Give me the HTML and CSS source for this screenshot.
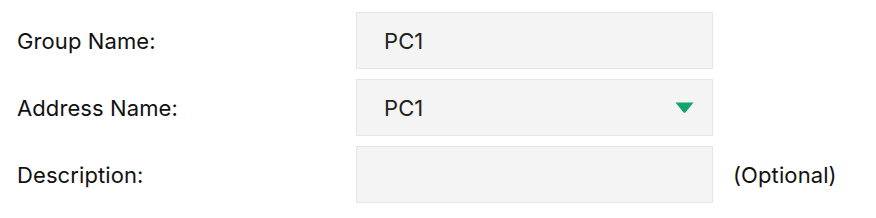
FILE: index.html
```html
<!DOCTYPE html>
<html>
<head>
  <meta charset="UTF-8">
  <title>Address Group</title>
  <link rel="stylesheet" href="styles.css">
</head>
<body>
  <div class="form">
    <div class="form-row">
      <label class="form-label" for="group-name">Group Name:</label>
      <div class="field">PC1</div>
    </div>

    <div class="form-row">
      <label class="form-label">Address Name:</label>
      <div class="field field-select">
        <span>PC1</span>
        <svg class="caret" width="19" height="11" viewBox="0 0 19 11">
          <path d="M0.5 0.5 H18.5 L10.6 10.2 Q9.5 11.2 8.4 10.2 Z" fill="#0fa56c"/>
        </svg>
      </div>
    </div>

    <div class="form-row">
      <label class="form-label">Description:</label>
      <div class="field"></div>
      <span class="hint">(Optional)</span>
    </div>
  </div>
</body>
</html>
```

FILE: styles.css
```css
body {
  margin: 0;
  padding: 12px 0 0 17px;
  font-family: Inter, 'Noto Sans', sans-serif;
  font-size: 22px;
  letter-spacing: 0.1px;
  color: #111;
  background-color: #fff;
}

.form {
  display: flex;
  flex-direction: column;
  gap: 10px;
}

.form-row {
  display: flex;
  align-items: center;
}

.form-label {
  width: 339px;
  flex-shrink: 0;
}

.field {
  box-sizing: border-box;
  width: 357px;
  height: 57px;
  padding: 0 18px 0 27px;
  background-color: #f4f4f4;
  border: 1px solid #e6e6e6;
  display: flex;
  align-items: center;
  color: #222;
}

.field-select {
  justify-content: space-between;
}

.caret {
  display: block;
}

.hint {
  margin-left: 20px;
  color: #111;
}
```
